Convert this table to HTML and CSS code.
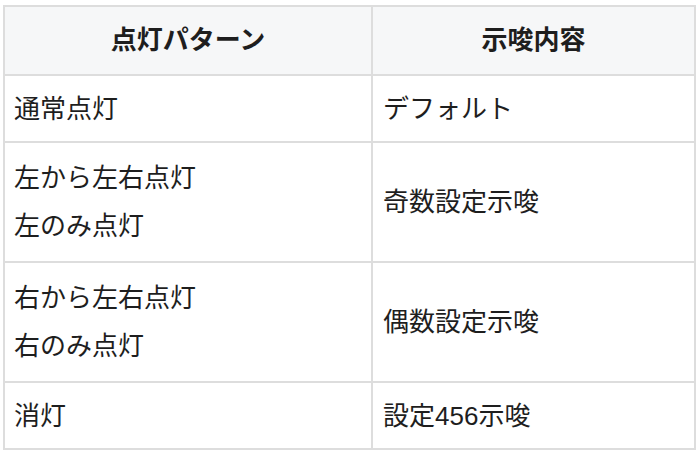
FILE: index.html
```html
<!DOCTYPE html>
<html lang="ja">
<head>
<meta charset="utf-8">
<link rel="stylesheet" href="styles.css">
</head>
<body>
<table class="tbl">
  <thead>
    <tr><th class="c1">点灯パターン</th><th class="c2">示唆内容</th></tr>
  </thead>
  <tbody>
    <tr><td>通常点灯</td><td>デフォルト</td></tr>
    <tr class="multi"><td>左から左右点灯<br>左のみ点灯</td><td>奇数設定示唆</td></tr>
    <tr class="multi"><td>右から左右点灯<br>右のみ点灯</td><td>偶数設定示唆</td></tr>
    <tr><td>消灯</td><td>設定456示唆</td></tr>
  </tbody>
</table>
</body>
</html>
```
FILE: styles.css
```css
html, body {
  margin: 0;
  padding: 0;
  background: #ffffff;
}
body {
  padding: 5px 4px 0 3px;
  font-family: "Liberation Sans", "Noto Sans CJK JP", sans-serif;
  color: #1e1e1e;
}
.tbl {
  border-collapse: collapse;
  width: 693px;
  font-size: 26px;
  line-height: 48px;
}
.tbl th, .tbl td {
  border: 2px solid #dddddd;
  text-align: left;
  vertical-align: middle;
  padding: 9px 9px 8px;
}
.tbl th {
  background: #f6f7f8;
  font-weight: bold;
  text-align: center;
  padding: 9px 9px 10px;
}
.tbl .c1 {
  width: 348px;
}
.tbl td + td {
  padding-left: 10px;
}
.tbl tr.multi td {
  padding-top: 11px;
  padding-bottom: 11px;
}
```
